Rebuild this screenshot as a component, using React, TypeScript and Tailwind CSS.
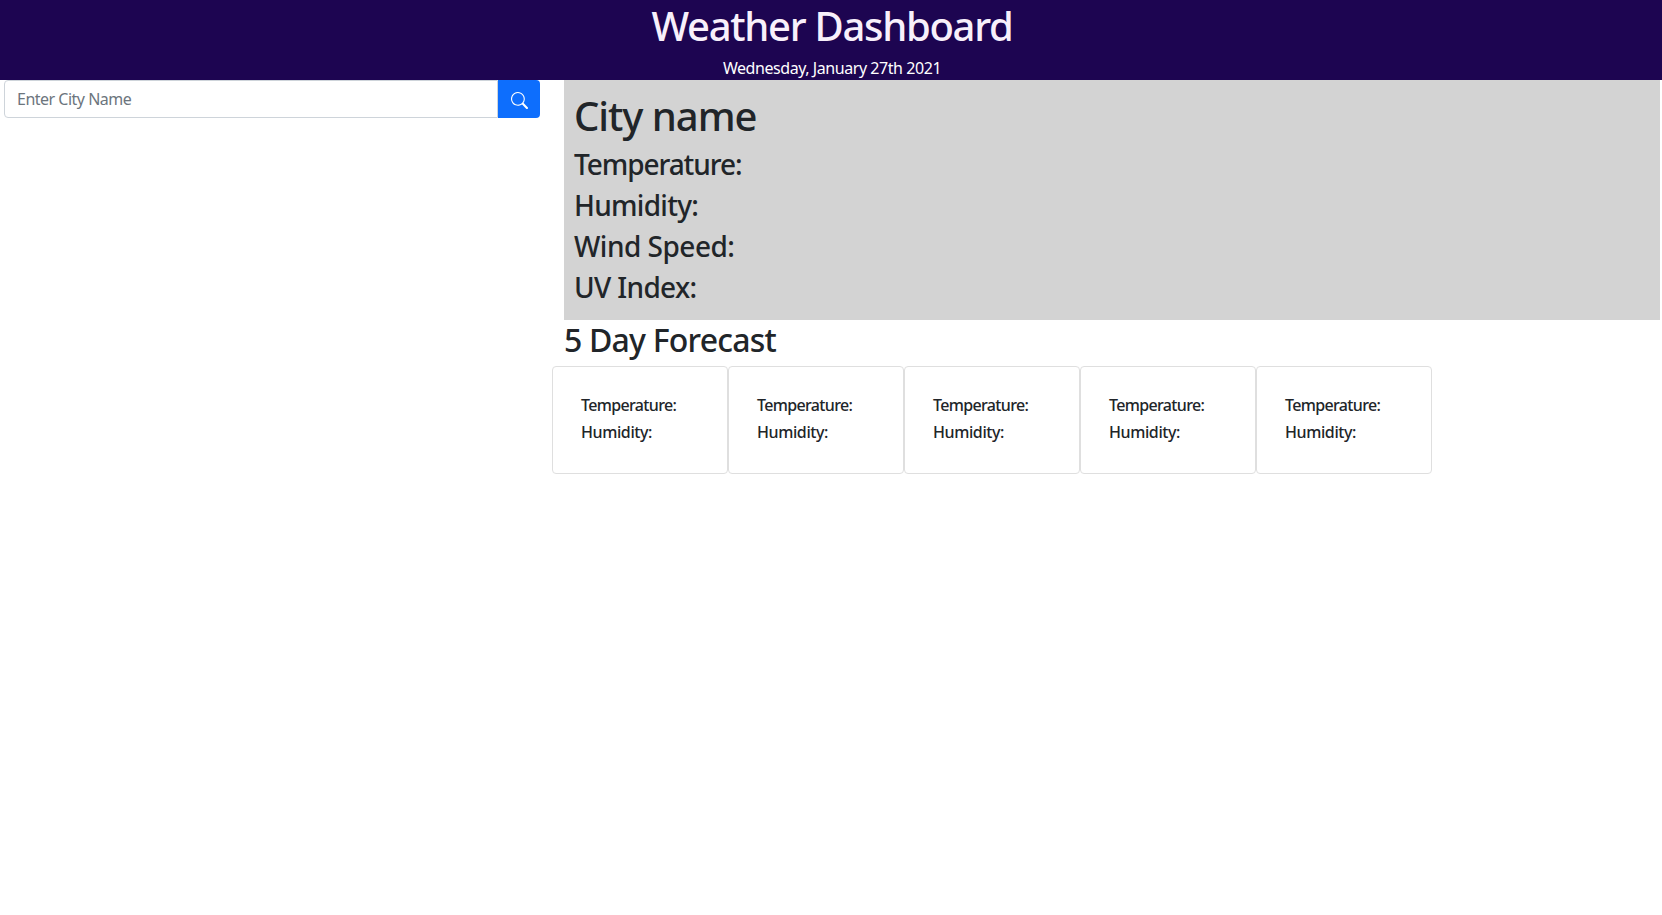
const days = [1, 2, 3, 4, 5]

function SearchIcon() {
    return (
        <svg xmlns="http://www.w3.org/2000/svg" width="17" height="17" fill="currentColor" viewBox="0 0 16 16">
            <path d="M11.742 10.344a6.5 6.5 0 1 0-1.397 1.398h-.001c.03.04.062.078.098.115l3.85 3.85a1 1 0 0 0 1.415-1.414l-3.85-3.85a1.007 1.007 0 0 0-.115-.1zM12 6.5a5.5 5.5 0 1 1-11 0 5.5 5.5 0 0 1 11 0z" />
        </svg>
    )
}

export default function App() {
    return (
        <div className="min-h-[915px] bg-white font-['Noto_Sans','Open_Sans',sans-serif] text-[#212529]">
            {/* Header */}
            <header className="h-[80px] bg-[#1d0551] pl-[2px] text-center">
                <h1 className="pt-[2px] text-[40px] leading-[48px] font-medium tracking-[-1.3px] text-[#f8f0fb]">Weather Dashboard</h1>
                <p className="mt-[6px] text-[16px] leading-[24px] tracking-[-0.44px] text-white">Wednesday, January 27th 2021</p>
            </header>

            <main className="flex">
                {/* Search */}
                <aside className="w-[564px] flex-none pl-[4px] pr-[24px]">
                    <div className="flex h-[38px]">
                        <input
                            type="text"
                            placeholder="Enter City Name"
                            className="min-w-0 flex-1 rounded-l-[4px] border border-[#ced4da] bg-white px-3 text-[16px] tracking-[-0.5px] outline-none placeholder:text-[#6c757d]"
                        />
                        <button className="flex w-[42px] flex-none items-center justify-center rounded-r-[4px] bg-[#0d6efd] pt-[2px] text-white">
                            <SearchIcon />
                        </button>
                    </div>
                </aside>

                <section className="min-w-0 flex-1 pr-[2px]">
                    {/* Current weather */}
                    <div className="h-[240px] bg-[#d3d3d3] px-[10px] pt-[12px]">
                        <h1 className="mb-[8px] text-[40px] leading-[48px] font-medium tracking-[-1.05px]">City name</h1>
                        <h3 className="mb-[7.5px] text-[28px] leading-[33.6px] font-medium tracking-[-1.07px]">Temperature:</h3>
                        <h3 className="mb-[7.5px] text-[28px] leading-[33.6px] font-medium tracking-[-0.72px]">Humidity:</h3>
                        <h3 className="mb-[7.5px] text-[28px] leading-[33.6px] font-medium tracking-[-0.5px]">Wind Speed:</h3>
                        <h3 className="text-[28px] leading-[33.6px] font-medium tracking-[-0.65px]">UV Index:</h3>
                    </div>

                    {/* Forecast */}
                    <h2 className="mt-[1px] mb-[7px] text-[32px] leading-[38.4px] font-medium tracking-[-0.8px]">5 Day Forecast</h2>
                    <div className="-ml-[12px] flex">
                        {days.map((day) => (
                            <div key={day} className="h-[108px] w-[176px] rounded-[4px] border border-[#dfdfdf] bg-white pt-[25px] pl-[28px]">
                                <p className="text-[16px] leading-[27px] font-medium tracking-[-0.65px]">Temperature:</p>
                                <p className="text-[16px] leading-[27px] font-medium tracking-[-0.4px]">Humidity:</p>
                            </div>
                        ))}
                    </div>
                </section>
            </main>
        </div>
    )
}
